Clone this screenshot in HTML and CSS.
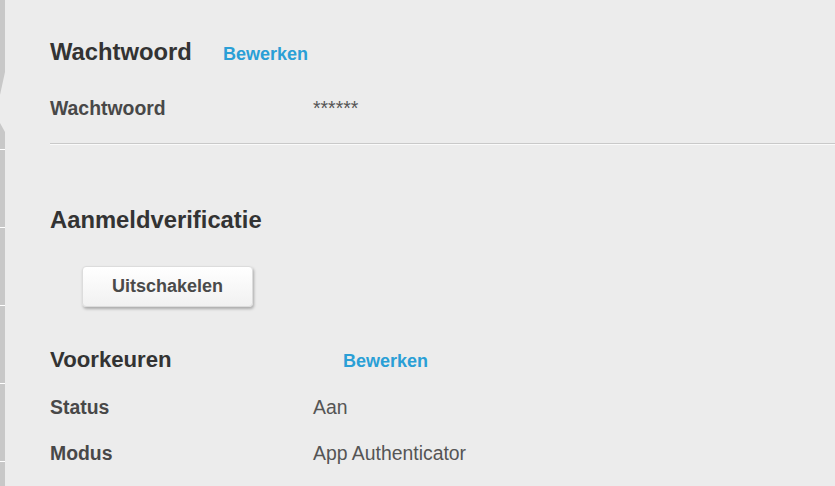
FILE: index.html
```html
<!DOCTYPE html>
<html lang="nl">
<head>
    <meta charset="UTF-8">
    <title>Beveiliging</title>
    <link rel="stylesheet" href="styles.css">
</head>
<body>
    <div class="page">
        <aside class="side-tabs">
            <div class="side-tab side-tab--first"></div>
            <div class="side-tab side-tab--active"></div>
            <div class="side-tab"></div>
            <div class="side-tab"></div>
            <div class="side-tab"></div>
            <div class="side-tab"></div>
            <div class="side-tab side-tab--rest"></div>
        </aside>

        <main class="settings">
            <section class="block block--password">
                <header class="block__head">
                    <h2>Wachtwoord</h2>
                    <a class="edit-link" href="#">Bewerken</a>
                </header>
                <dl class="props">
                    <dt>Wachtwoord</dt>
                    <dd>******</dd>
                </dl>
            </section>

            <hr class="divider">

            <section class="block block--twofactor">
                <h2>Aanmeldverificatie</h2>
                <button type="button" class="btn">Uitschakelen</button>

                <header class="prefs-head">
                    <h3>Voorkeuren</h3>
                    <a class="edit-link edit-link--col" href="#">Bewerken</a>
                </header>
                <dl class="props props--prefs">
                    <dt>Status</dt>
                    <dd>Aan</dd>
                    <dt>Modus</dt>
                    <dd>App Authenticator</dd>
                </dl>
            </section>
        </main>
    </div>
</body>
</html>
```

FILE: styles.css
```css
html, body {
    margin: 0;
    height: 100%;
    overflow: hidden;
}

body {
    background-color: #ececec;
    font-family: "Liberation Sans", Arial, sans-serif;
    color: #333;
}

.page {
    display: flex;
    min-height: 100%;
}

/* left tab strip, mostly scrolled out of view */
.side-tabs {
    width: 5px;
    flex: none;
    display: flex;
    flex-direction: column;
}

.side-tab {
    height: 77px;
    border-bottom: 1px solid #fff;
    background-color: #c8c8c8;
}

.side-tab--first {
    height: 72px;
    border-bottom: 0;
}

.side-tab--rest {
    flex: 1;
    border-bottom: 0;
}

.side-tab--active {
    clip-path: polygon(0 0, 100% 0, 0 23px, 0 51px, 100% 60px, 100% 100%, 0 100%);
}

.settings {
    flex: 1;
    padding: 38px 0 0 45px;
}

.settings h2 {
    margin: 0;
    font-size: 23.8px;
    line-height: 28px;
    font-weight: bold;
    color: #333;
}

.block__head {
    display: flex;
    align-items: baseline;
}

.edit-link {
    margin-left: 31px;
    font-size: 18px;
    font-weight: bold;
    color: #2a9fd6;
    text-decoration: none;
}

.props {
    display: grid;
    grid-template-columns: 263px 1fr;
    row-gap: 22px;
    margin: 30px 0 0;
    font-size: 19.4px;
    line-height: 24px;
}

.props dt {
    font-weight: bold;
    color: #484848;
}

.props dd {
    margin: 0;
    color: #555;
}

.divider {
    margin: 23px 0 0;
    border: 0;
    border-top: 1px solid #c9c9c9;
    border-bottom: 1px solid #fafafa;
}

.block--twofactor {
    padding-top: 61px;
}

.btn {
    display: block;
    margin: 32px 0 0 32px;
    width: 171px;
    height: 41px;
    padding: 0;
    border: 1px solid #dcdcdc;
    border-radius: 4px;
    background: linear-gradient(#ffffff, #f1f1f1);
    box-shadow: 1px 2px 3px rgba(0, 0, 0, 0.28);
    font-family: inherit;
    font-size: 18px;
    font-weight: bold;
    color: #4a4a4a;
}

.prefs-head {
    display: grid;
    grid-template-columns: 263px 1fr;
    align-items: baseline;
    margin-top: 39px;
}

.prefs-head h3 {
    margin: 0;
    font-size: 22.2px;
    line-height: 28px;
    color: #333;
}

.edit-link--col {
    justify-self: start;
    margin-left: 30px;
}

.props--prefs {
    margin-top: 21px;
}
```
